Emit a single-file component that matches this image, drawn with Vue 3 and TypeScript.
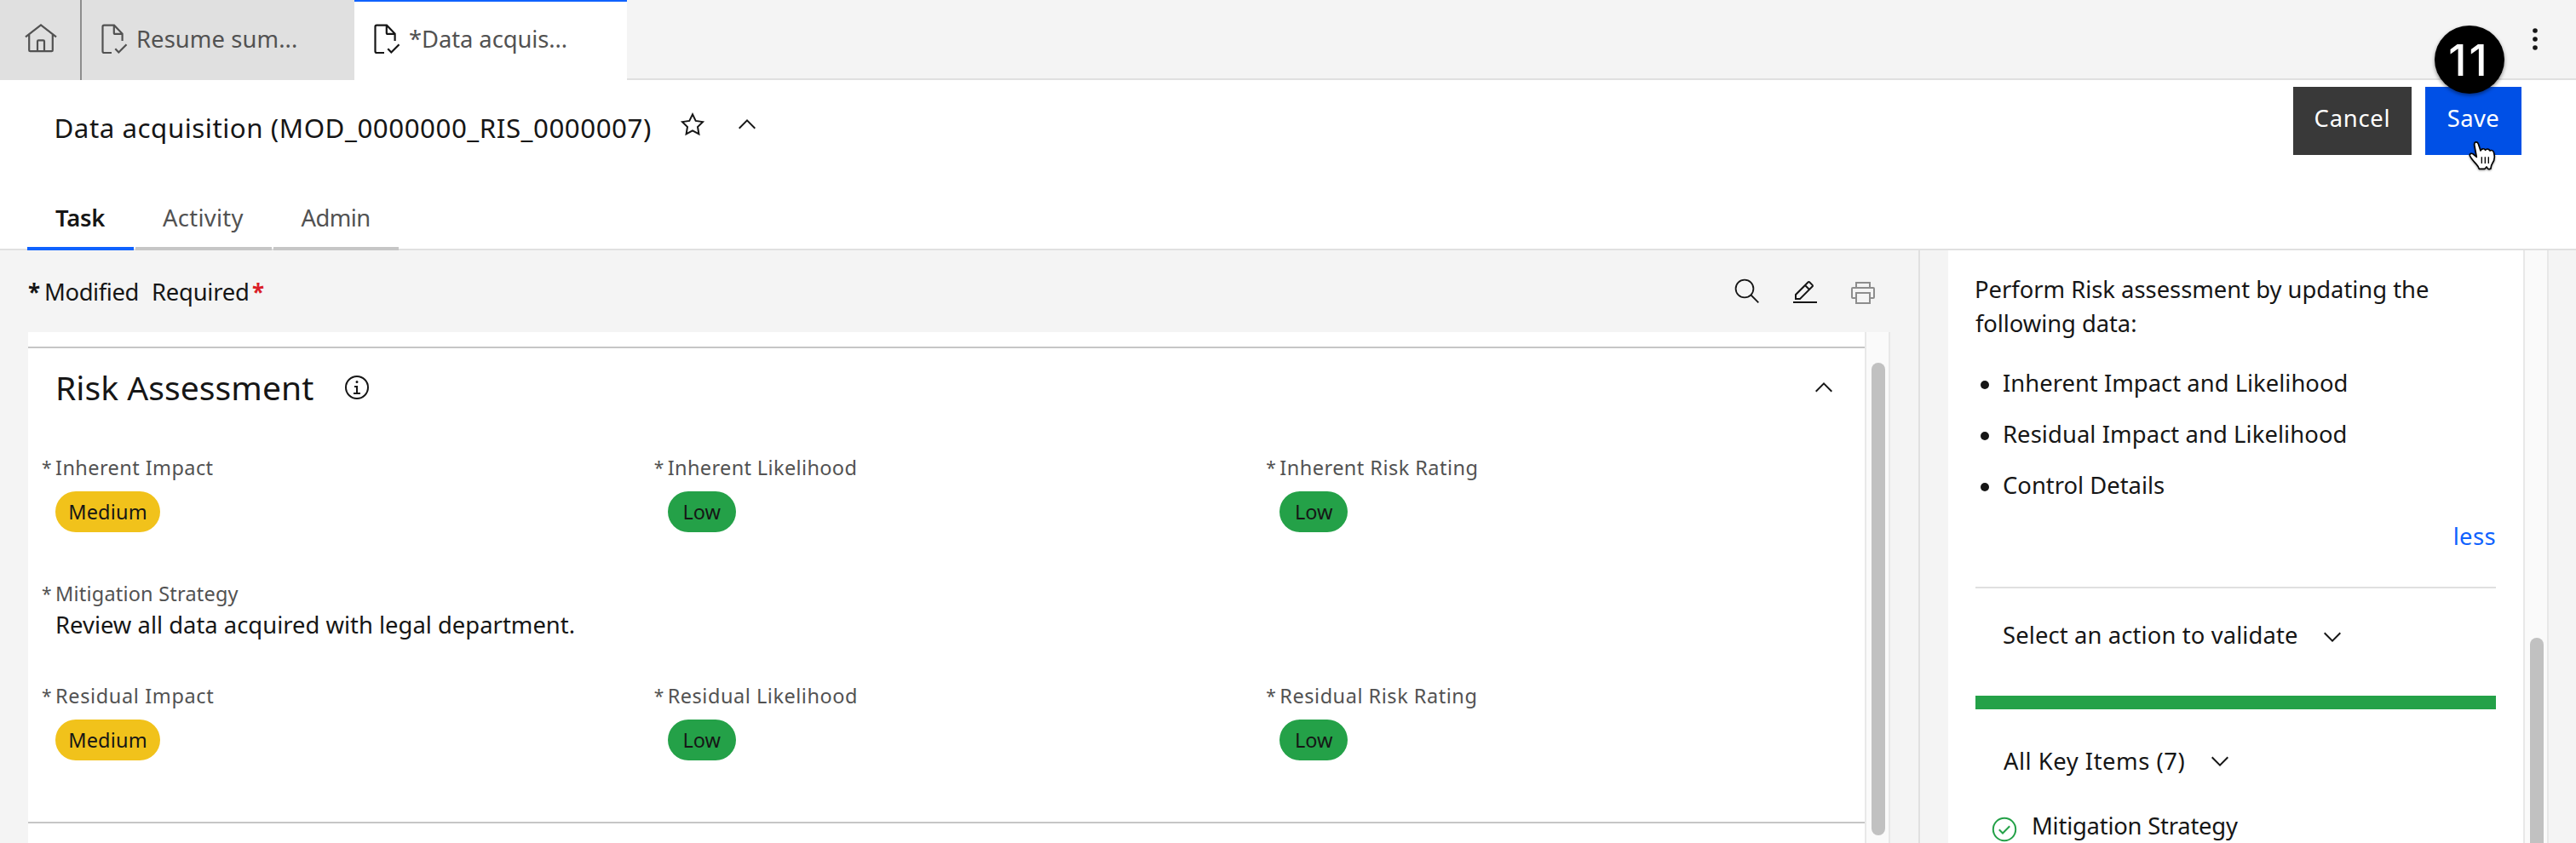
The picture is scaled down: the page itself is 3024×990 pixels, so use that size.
<script setup lang="ts">
interface Field { label: string; value: string; tone: 'medium' | 'low'; tracking: number }
interface Tip { text: string; tracking: number }

const inherent: Field[] = [
  { label: 'Inherent Impact', value: 'Medium', tone: 'medium', tracking: 0.42 },
  { label: 'Inherent Likelihood', value: 'Low', tone: 'low', tracking: 0.37 },
  { label: 'Inherent Risk Rating', value: 'Low', tone: 'low', tracking: 0.46 },
]
const residual: Field[] = [
  { label: 'Residual Impact', value: 'Medium', tone: 'medium', tracking: 0.63 },
  { label: 'Residual Likelihood', value: 'Low', tone: 'low', tracking: 0.53 },
  { label: 'Residual Risk Rating', value: 'Low', tone: 'low', tracking: 0.53 },
]
const tips: Tip[] = [
  { text: 'Inherent Impact and Likelihood', tracking: 0.02 },
  { text: 'Residual Impact and Likelihood', tracking: 0.08 },
  { text: 'Control Details', tracking: 0 },
]
const chevronUp = 'M16 10 26 20 24.6 21.4 16 12.8 7.4 21.4 6 20z'
const chevronDown = 'M16 22 6 12 7.4 10.6 16 19.2 24.6 10.6 26 12z'
</script>

<template>
  <div class="app">
    <nav class="tabbar">
      <div class="home">
        <svg class="home-icon" viewBox="0 0 40 40">
          <path d="M2 17.3 20 3.4 38 17.3M6.2 14.2V33q0 1.2 1.2 1.2h25.200q1.200 0 1.200-1.200V14.200M16 34V22.500q0-1.200 1.200-1.200h5.600q1.200 0 1.200 1.200V34" />
        </svg>
      </div>
      <div class="doc-tab">
        <svg class="doc-icon" viewBox="0 0 40 40">
          <path d="M17 36H8.200q-1.700 0-1.700-1.700V5.400q0-1.700 1.700-1.700H20L29.600 13.600V22M19.800 4v8.400q0 1.500 1.500 1.500h8M21.300 31.300l4 4.200 9.200-9.300" />
        </svg>
        <span class="doc-name resume">Resume sum...</span>
      </div>
      <div class="doc-tab active">
        <svg class="doc-icon" viewBox="0 0 40 40">
          <path d="M17 36H8.200q-1.700 0-1.700-1.700V5.400q0-1.700 1.700-1.700H20L29.600 13.600V22M19.800 4v8.400q0 1.500 1.500 1.500h8M21.300 31.300l4 4.200 9.200-9.300" />
        </svg>
        <span class="doc-name data">*Data acquis...</span>
      </div>
      <div class="rest">
        <svg class="overflow" viewBox="0 0 32 32"><circle cx="16" cy="6" r="2.800" /><circle cx="16" cy="16" r="2.800" /><circle cx="16" cy="26" r="2.800" /></svg>
      </div>
    </nav>

    <header class="header">
      <div class="title-row">
        <h1 class="title">Data acquisition (MOD_0000000_RIS_0000007)</h1>
        <svg class="icon star" viewBox="0 0 32 32"><path class="line" d="M16 4.300 19.700 11.900 28 13.100 22 19 23.400 27.300 16 23.400 8.600 27.300 10 19 4 13.100 12.300 11.900z" /></svg>
        <svg class="icon fold" viewBox="0 0 32 32"><path :d="chevronUp" /></svg>
        <div class="actions">
          <button class="btn cancel">Cancel</button>
          <button class="btn save">Save</button>
        </div>
      </div>
      <div class="views">
        <div class="view task">Task</div>
        <div class="view activity">Activity</div>
        <div class="view admin">Admin</div>
      </div>
    </header>

    <main class="main">
      <section class="content">
        <div class="toolbar">
          <b class="mark">*</b><span class="modified">Modified</span>
          <span class="required">Required</span><b class="mark red">*</b>
          <div class="tools">
            <svg class="icon search" viewBox="0 0 32 32"><circle class="thin" cx="13" cy="13" r="10.400" /><path class="thin" d="M20.500 20.500 29.300 29.300" /></svg>
            <svg class="icon" viewBox="0 0 32 32"><path d="M2 26H30V28H2zM25.400 9c.8-.8.8-2 0-2.800l-3.600-3.600c-.8-.8-2-.8-2.800 0l-15 15V24h6.400L25.400 9zM20.400 4 24 7.600l-3 3L17.400 7 20.400 4zM6 22v-3.600l10-10 3.600 3.600-10 10H6z" /></svg>
            <svg class="icon print" viewBox="0 0 32 32"><path d="M28 9H25V3H7v6H4a2 2 0 0 0-2 2v10a2 2 0 0 0 2 2h3v6h18v-6h3a2 2 0 0 0 2-2V11a2 2 0 0 0-2-2ZM9 5h14v4H9Zm14 22H9V17h14Zm5-6h-3v-6H7v6H4V11h24Z" /></svg>
          </div>
        </div>

        <div class="pane">
          <div class="card">
            <div class="previous"></div>
            <div class="section">
              <div class="section-head">
                <h2>Risk Assessment</h2>
                <svg class="icon" viewBox="0 0 32 32"><circle class="line" cx="16" cy="16" r="13" /><path d="M17 22V14H13v2h2v6H12v2h8V22zM16 8a1.500 1.500 0 1 0 1.500 1.500A1.500 1.500 0 0 0 16 8z" /></svg>
                <svg class="icon collapse" viewBox="0 0 32 32"><path :d="chevronUp" /></svg>
              </div>
              <div class="fields">
                <div v-for="f in inherent" :key="f.label" class="field">
                  <div class="label"><span class="ast">*</span><span :style="{ letterSpacing: f.tracking + 'px' }">{{ f.label }}</span></div>
                  <span class="pill" :class="f.tone">{{ f.value }}</span>
                </div>
              </div>
              <div class="strategy">
                <div class="label"><span class="ast">*</span><span class="strategy-label">Mitigation Strategy</span></div>
                <p class="strategy-text">Review all data acquired with legal department.</p>
              </div>
              <div class="fields">
                <div v-for="f in residual" :key="f.label" class="field">
                  <div class="label"><span class="ast">*</span><span :style="{ letterSpacing: f.tracking + 'px' }">{{ f.label }}</span></div>
                  <span class="pill" :class="f.tone">{{ f.value }}</span>
                </div>
              </div>
            </div>
          </div>
          <div class="scroll left"><div class="thumb"></div></div>
        </div>
      </section>

      <aside class="side">
        <div class="guide">
          <p class="intro"><span class="intro-a">Perform Risk assessment by updating the</span><br /><span class="intro-b">following data:</span></p>
          <ul>
            <li v-for="t in tips" :key="t.text" :style="{ letterSpacing: t.tracking + 'px' }">{{ t.text }}</li>
          </ul>
          <a class="less">less</a>
          <div class="divider"></div>
          <div class="dropdown select"><span>Select an action to validate</span><svg class="icon" viewBox="0 0 32 32"><path :d="chevronDown" /></svg></div>
          <div class="progress"></div>
          <div class="dropdown keys"><span>All Key Items (7)</span><svg class="icon" viewBox="0 0 32 32"><path :d="chevronDown" /></svg></div>
          <div class="key-item">
            <svg class="icon check" viewBox="0 0 32 32"><circle class="line" cx="16" cy="16" r="13.200" /><path class="line" d="M9.800 16.300 14 20.500 22.200 12.200" /></svg>
            <span>Mitigation Strategy</span>
          </div>
        </div>
        <div class="scroll right"><div class="thumb"></div></div>
      </aside>
    </main>

    <div class="badge">11</div>
    <svg class="pointer" viewBox="770 494 100 110">
      <path d="M793 509C792 498 804 496 807 506L815 530C818 522 828 521 832 528C836 522 845 523 848 530C854 526 861 530 862 538C866 552 862 568 856 576C852 582 852 587 851 593Q844 597 840 592L836 587 830 594H810C808 585 802 580 796 573C788 564 780 555 777 547C776 539 784 538 789 542L801 552Z" />
      <path class="creases" d="M819 552V575M831 552V575M843 552V575" />
    </svg>
  </div>
</template>

<style>
html, body { margin: 0; background: #fff; overflow: hidden; }
</style>

<style scoped>
.app { position: relative; width: 3024px; height: 990px; overflow: hidden; background: #fff; color: #161616; font-family: "Noto Sans", sans-serif; font-size: 27.4px; line-height: 40px; white-space: nowrap; }
.app * { box-sizing: border-box; }
h1, h2, p, ul { margin: 0; padding: 0; font-weight: 400; }
svg { display: block; flex: none; }
.icon { width: 32px; height: 32px; fill: #161616; }
.line { fill: none; stroke: #161616; stroke-width: 2; }
.thin { fill: none; stroke: #161616; stroke-width: 1.8; }

.tabbar { display: flex; height: 94px; background: #f4f4f4; }
.home { width: 96px; padding: 26px 0 0 28px; background: #e0e0e0; border-right: 2px solid #8d8d8d; }
.home-icon, .doc-icon { width: 40px; height: 40px; fill: none; stroke: #525252; stroke-width: 2.2; }
.doc-tab { display: flex; width: 320px; padding: 26px 0 0 18px; background: #e0e0e0; color: #525252; }
.doc-tab.active { padding-top: 24px; background: #fff; border-top: 2px solid #0f62fe; }
.active .doc-icon { stroke: #161616; }
.doc-name { margin-left: 6px; }
.resume { letter-spacing: .08px; }
.data { letter-spacing: -.08px; }
.rest { display: flex; flex: 1; justify-content: flex-end; padding: 30px 32px 0 0; border-bottom: 2px solid #e0e0e0; }
.overflow { width: 32px; height: 32px; fill: #161616; }

.header { height: 200px; border-bottom: 2px solid #e0e0e0; }
.title-row { display: flex; height: 136px; padding-left: 63.5px; }
.title { width: 733.5px; margin-top: 36px; font-size: 31.3px; letter-spacing: .52px; }
.star { margin-top: 36px; }
.fold { margin: 36px 0 0 32px; }
.actions { display: flex; gap: 16px; margin: 8px 64px 0 auto; }
.btn { height: 80px; padding: 0 0 7px; border: 0; color: #fff; font: inherit; text-align: center; }
.cancel { width: 139px; background: #393939; letter-spacing: .75px; }
.save { width: 113px; background: #0050e6; letter-spacing: .4px; }
.views { display: flex; gap: 2px; height: 64px; padding-left: 32px; }
.view { height: 64px; padding: 6px 0 0 32px; border-bottom: 4px solid #c6c6c6; color: #525252; }
.task { width: 125px; padding-left: 33px; border-color: #0f62fe; color: #161616; font-weight: 600; letter-spacing: -.2px; }
.activity { width: 160px; letter-spacing: .29px; }
.admin { width: 147px; padding-left: 32.500px; letter-spacing: -.55px; }

.main { display: flex; height: 696px; background: #f4f4f4; }
.content { width: 2254px; padding-left: 33px; border-right: 2px solid #e0e0e0; }
.toolbar { display: flex; height: 96px; padding: 29px 49px 0 0; }
.mark { width: 19px; font-size: 26px; font-weight: 700; }
.mark.red { margin-left: 3px; color: #da1e28; }
.modified { width: 126px; letter-spacing: -.38px; }
.required { width: 115px; letter-spacing: -.23px; }
.tools { display: flex; gap: 36px; margin: 5px 0 0 auto; }
.search { margin-top: -2px; }
.print { fill: #8d8d8d; }
.pane { display: flex; height: 600px; }
.card { width: 2156px; background: #fff; }
.previous { height: 19px; border-bottom: 2px solid #c6c6c6; }
.section { height: 558px; padding-top: 18px; border-bottom: 2px solid #c6c6c6; }
.section-head { display: flex; align-items: center; height: 56px; padding: 0 32px; }
h2 { width: 338px; font-size: 39.1px; line-height: 56px; letter-spacing: .03px; }
.collapse { margin-left: auto; }
.fields { display: grid; grid-template-columns: repeat(3, 1fr); margin-top: 50px; }
.field, .strategy { padding-left: 16px; }
.label { display: flex; height: 32px; color: #525252; font-size: 23.5px; line-height: 32px; }
.ast { width: 16px; font-size: 21px; }
.pill { display: block; height: 48px; margin: 12px 0 0 16px; border-radius: 24px; font-size: 23.5px; line-height: 48px; text-align: center; }
.medium { width: 123px; background: #f1c21b; letter-spacing: .18px; }
.low { width: 80px; background: #24a148; }
.strategy { margin-top: 56px; }
.strategy + .fields { margin-top: 47px; }
.strategy-label { letter-spacing: .2px; }
.strategy-text { margin: 1px 0 0 16px; letter-spacing: .01px; }

.scroll { width: 30px; background: #fafafa; border: solid #e8e8e8; border-width: 0 2px; padding: 36px 6px 0; }
.thumb { width: 16px; height: 555px; border-radius: 8px; background: #c1c1c1; }
.scroll.right { padding-top: 455px; overflow: hidden; }

.side { display: flex; flex: 1; padding-left: 33px; overflow: hidden; }
.guide { width: 675px; height: 696px; padding: 26px 32px 0; background: #fff; overflow: hidden; }
.intro { margin-left: -1px; }
.intro-a { letter-spacing: -.02px; }
.intro-b { margin-left: 1px; letter-spacing: -.07px; }
ul { display: flex; flex-direction: column; gap: 20px; margin: 30px 0 20px; list-style: none; }
li { display: flex; align-items: center; padding-left: 6px; }
li::before { content: ""; width: 10px; height: 10px; margin: 3px 16px 0 0; border-radius: 50%; background: #161616; }
.less { display: block; color: #0f62fe; text-align: right; letter-spacing: .4px; }
.divider { height: 2px; margin-top: 39px; background: #e0e0e0; }
.dropdown { display: flex; align-items: center; padding-left: 32px; }
.select { margin-top: 35px; letter-spacing: .12px; }
.select span { width: 371px; }
.select .icon { margin-top: 3px; }
.progress { height: 16px; margin-top: 51px; background: #24a148; }
.keys { margin-top: 41px; padding-left: 33px; letter-spacing: .52px; }
.keys span { width: 238px; }
.key-item { display: flex; margin: 36px 0 0 18px; letter-spacing: -.22px; }
.check { margin: 8px 16px 0 0; }
.check .line { stroke: #24a148; }

.badge { position: absolute; left: 2858px; top: 30px; width: 82px; height: 80px; border-radius: 50%; background: #000; color: #fff; font: 500 51px/81px Inter, sans-serif; text-align: center; box-shadow: 0 2px 4px rgba(0, 0, 0, .45); font-kerning: none; letter-spacing: 3px; text-indent: -1px; }
.pointer { position: absolute; left: 2896.7px; top: 164.7px; width: 33.3px; height: 36.7px; fill: #fff; stroke: #000; stroke-width: 5; stroke-linejoin: round; filter: drop-shadow(0 1px 1px rgba(0, 0, 0, .4)); }
.creases { stroke-width: 4; }
</style>
